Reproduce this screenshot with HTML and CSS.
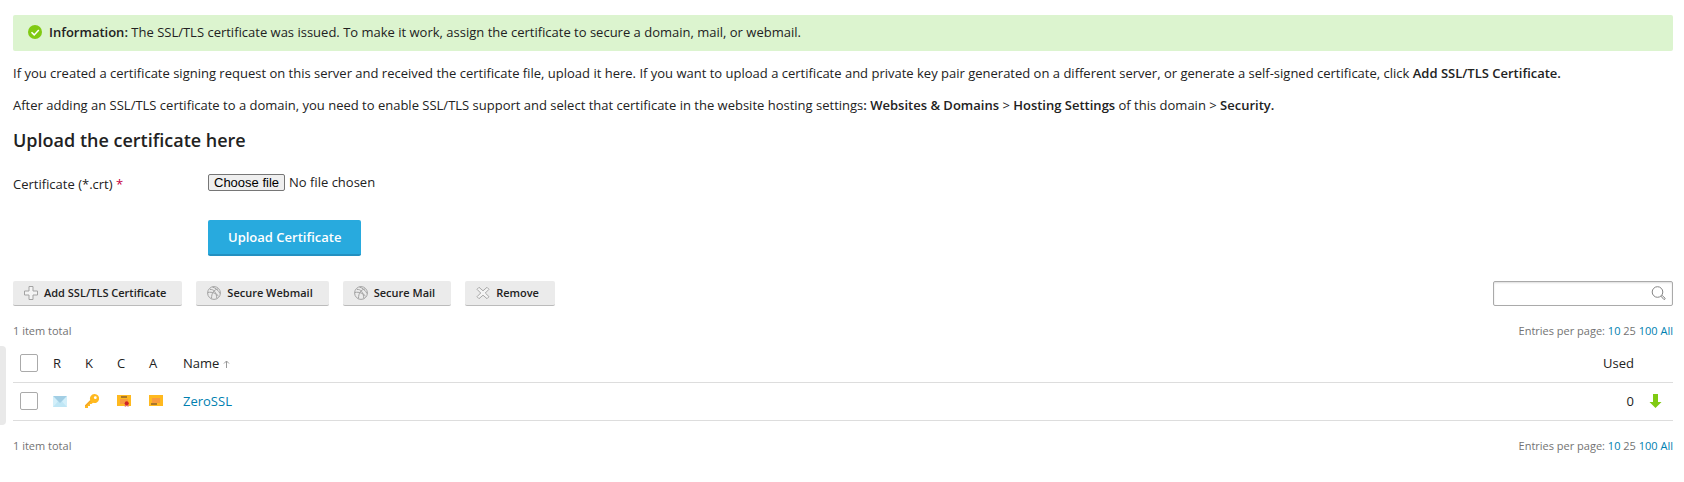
FILE: index.html
```html
<!DOCTYPE html>
<html lang="en">
<head>
<meta charset="utf-8">
<title>SSL/TLS Certificates</title>
<link rel="stylesheet" href="styles.css">
</head>
<body>
<svg class="symbols" aria-hidden="true">
  <symbol id="globe" viewBox="0 0 14 14">
    <g fill="none" stroke="#a3a3a3">
      <circle cx="7" cy="7" r="6.400"/>
      <path d="M3 3.500C6.500 3 9.500 6 9.800 12.500M11 3C7 3.500 4.500 7 4.500 12.500M1 6.500C5 5.500 9.500 7.500 12 10.500M5.500 1C8.500 2 11.500 4.500 13 7.500"/>
    </g>
  </symbol>
</svg>
<main class="page">
  <div class="alert" role="status">
    <svg class="alert-icon" viewBox="0 0 14 14" aria-hidden="true"><circle cx="7" cy="7" r="7" fill="#80ca12"/><path d="M3.500 7.200 6.200 9.900 10.800 5" fill="none" stroke="#fff" stroke-width="1.500"/></svg>
    <span><strong>Information:</strong> The SSL/TLS certificate was issued. To make it work, assign the certificate to secure a domain, mail, or webmail.</span>
  </div>
  <p class="text">If you created a certificate signing request on this server and received the certificate file, upload it here. If you want to upload a certificate and private key pair generated on a different server, or generate a self-signed certificate, click <strong>Add SSL/TLS Certificate.</strong></p>
  <p class="text">After adding an SSL/TLS certificate to a domain, you need to enable SSL/TLS support and select that certificate in the website hosting settings<strong>: Websites &amp; Domains</strong> &gt; <strong>Hosting Settings</strong> of this domain &gt; <strong>Security.</strong></p>

  <h1 class="heading">Upload the certificate here</h1>
  <form class="upload">
    <label class="upload-label" for="cert">Certificate (*.crt) <span class="required">*</span></label>
    <div class="file">
      <span class="file-button">Choose file</span>
      <span>No file chosen</span>
      <input class="file-input" type="file" id="cert" accept=".crt">
    </div>
    <button class="primary" type="button">Upload Certificate</button>
  </form>

  <div class="toolbar">
    <button class="tool" type="button">
      <svg class="tool-icon" viewBox="0 0 14 14" aria-hidden="true"><path d="M5 .5h4V5h4.500v4H9v4.500H5V9H.5V5H5z" fill="#f4f4f4" stroke="#a3a3a3"/></svg>Add SSL/TLS Certificate</button>
    <button class="tool" type="button"><svg class="tool-icon" aria-hidden="true"><use href="#globe"/></svg>Secure Webmail</button>
    <button class="tool" type="button"><svg class="tool-icon" aria-hidden="true"><use href="#globe"/></svg>Secure Mail</button>
    <button class="tool" type="button">
      <svg class="tool-icon" viewBox="0 0 14 14" aria-hidden="true"><path d="M1 3.300 3 1.300 7 4.800 11 1.300 13 3.300 9.300 7 13 10.700 11 12.700 7 9.200 3 12.700 1 10.700 4.700 7z" fill="#f4f4f4" stroke="#a8a8a8" stroke-linejoin="round"/></svg>Remove</button>
    <div class="search">
      <input class="search-input" type="text" aria-label="Search">
      <button class="search-button" type="button" aria-label="Search"><svg class="search-icon" viewBox="0 0 15 15" aria-hidden="true"><g fill="none" stroke="#858585"><circle cx="6.500" cy="6" r="5.300"/><path d="M10.300 10.600 11.300 9.600 14.200 12.300Q14 13.700 12.900 13.500z"/></g></svg></button>
    </div>
  </div>

  <div class="pager">
    <span>1 item total</span>
    <span>Entries per page: <a href="#">10</a> 25 <a href="#">100</a> <a href="#">All</a></span>
  </div>
  <div class="table-wrap">
  <table class="list">
    <thead>
      <tr>
        <th class="col-check"><input class="check" type="checkbox" aria-label="Select all"></th>
        <th class="col-icon">R</th>
        <th class="col-icon">K</th>
        <th class="col-icon">C</th>
        <th class="col-icon">A</th>
        <th class="col-name">Name <svg class="sort" viewBox="0 0 7 8" aria-hidden="true"><path d="M3.500 8V1M1 3.500 3.500 1 6 3.500" fill="none" stroke="#999"/></svg></th>
        <th class="col-used">Used</th>
        <th class="col-action"></th>
      </tr>
    </thead>
    <tbody>
      <tr>
        <td class="col-check"><input class="check" type="checkbox" aria-label="Select ZeroSSL"></td>
        <td class="col-icon"><svg class="row-icon" viewBox="0 0 14 14" aria-hidden="true"><path d="M0 2h14v11H0z" fill="#bfe6f5"/><path d="M0 2h14L7 9z" fill="#a2cee4"/><path d="M0 2v11l5-5.500zM14 2v11L9 7.500z" fill="#d3effa"/></svg></td>
        <td class="col-icon"><svg class="row-icon" viewBox="0 0 14 14" aria-hidden="true"><path d="M9.500 0a4.500 4.500 0 0 0-4.300 6L0 11.200V14h3v-2h2v-2h1.500L8 8.700A4.500 4.500 0 1 0 9.500 0z" fill="#ffb91f"/><circle cx="10.300" cy="3.700" r="1.400" fill="#fff"/><path d="M.5 12 5.500 7" stroke="#eb9632" fill="none"/></svg></td>
        <td class="col-icon"><svg class="row-icon" viewBox="0 0 14 14" aria-hidden="true"><path d="M0 1h14v11H0z" fill="#ffb91f"/><path d="M3 5h8v5H3z" fill="#f89b3f"/><path d="M4 2h6v2H4z" fill="#aa7728"/><path d="M7.800 9h3.700v4l-1.800-1-1.900 1z" fill="#e57468"/><circle cx="9.700" cy="9.300" r="2" fill="#cf2424"/></svg></td>
        <td class="col-icon"><svg class="row-icon" viewBox="0 0 14 14" aria-hidden="true"><path d="M0 1h14v11H0z" fill="#ffb91f"/><path d="M3 4h8v5H3z" fill="#f89b3f"/><path d="M2 9h6v2H2z" fill="#aa7728"/></svg></td>
        <td class="col-name"><a href="#">ZeroSSL</a></td>
        <td class="col-used">0</td>
        <td class="col-action"><a href="#" aria-label="Download"><svg class="row-icon" viewBox="0 0 14 14" aria-hidden="true"><path d="M4 0h5v8h3.500L6.500 14 .5 8H4z" fill="#80ca12"/></svg></a></td>
      </tr>
    </tbody>
  </table>
  <button class="handle" type="button" aria-label="Toggle sidebar"></button>
  </div>
  <div class="pager">
    <span>1 item total</span>
    <span>Entries per page: <a href="#">10</a> 25 <a href="#">100</a> <a href="#">All</a></span>
  </div>
</main>
</body>
</html>
```
FILE: styles.css
```css
* { box-sizing: border-box; }
body {
  margin: 0;
  background: #fff;
  color: #222;
  font: 13px/20px "Open Sans", "Noto Sans", sans-serif;
}
strong { font-weight: 600; }
a { color: #0080b0; text-decoration: none; }
svg { flex: none; }
.symbols { position: absolute; width: 0; height: 0; }
.page { padding: 15px 11px 0 13px; }

.alert {
  display: flex;
  align-items: center;
  gap: 7px;
  padding: 7px 15px 9px;
  margin-bottom: 12px;
  background: #dcf4cf;
  border-radius: 2px;
}
.alert-icon { width: 14px; height: 14px; }
.text { margin: 0 0 12px; }
.heading { margin: 0; font-size: 18px; line-height: 26px; font-weight: 600; }

.upload {
  display: grid;
  grid-template-columns: 195px max-content;
  align-items: start;
  row-gap: 26px;
  margin: 19px 0 25px;
}
.upload-label { padding-top: 2px; }
.required { color: #c5003e; }
.file { position: relative; display: flex; align-items: center; gap: 4px; }
.file-button {
  padding: 0 5px;
  border: 1px solid #767676;
  border-radius: 2px;
  background: #efefef;
  color: #000;
  font: 13px/15px "Liberation Sans", Arial, sans-serif;
}
.file-input { position: absolute; inset: 0; width: 100%; opacity: 0; }
.primary {
  grid-column: 2;
  justify-self: start;
  height: 36px;
  padding: 0 20px;
  border: 0;
  border-bottom: 2px solid #2390c0;
  border-radius: 2px;
  background: #28aade;
  color: #fff;
  font: 600 13px/20px "Open Sans", sans-serif;
}

.toolbar { display: flex; gap: 14px; margin-bottom: 15px; }
.tool {
  display: flex;
  align-items: center;
  gap: 6px;
  height: 25px;
  padding: 0 16px 0 11px;
  border: 0;
  border-bottom: 1px solid #bbb;
  border-radius: 2px;
  background: #ebebeb;
  color: #222;
  font: 600 11px/16px "Open Sans", sans-serif;
}
.tool-icon { width: 14px; height: 14px; }
.search {
  display: flex;
  align-items: center;
  width: 180px;
  height: 25px;
  margin-left: auto;
  border: 1px solid #aaa;
  border-radius: 2px;
  box-shadow: inset 0 1px 2px #ddd;
}
.search-input { flex: 1; min-width: 0; border: 0; background: none; font: inherit; }
.search-button { display: flex; padding: 0 6px; border: 0; background: none; }
.search-icon { width: 15px; height: 15px; }

.pager {
  display: flex;
  justify-content: space-between;
  color: #737373;
  font-size: 11px;
}
.table-wrap { position: relative; margin: 3px 0 15px; }
.handle {
  position: absolute;
  left: -13px;
  top: 2px;
  bottom: -4px;
  width: 6px;
  padding: 0;
  border: 0;
  border-radius: 0 4px 4px 0;
  background: #e9e9e9;
}
.list { width: 100%; border-collapse: collapse; }
.list th, .list td {
  height: 38px;
  padding: 0;
  border-bottom: 1px solid #ddd;
  text-align: left;
  font-weight: 400;
}
.col-check { width: 40px; }
.col-icon { width: 32px; }
.list .col-name { padding-left: 2px; }
.list .col-check { padding-left: 7px; }
.list .col-used { width: 80px; text-align: right; }
.list .col-action { width: 39px; padding-left: 15px; }
.check {
  display: block;
  width: 18px;
  height: 18px;
  margin: 0;
  appearance: none;
  border: 1px solid #aaa;
  border-radius: 2px;
  background: #fff;
}
.row-icon { display: block; width: 14px; height: 14px; }
.sort { width: 7px; height: 8px; }
```
